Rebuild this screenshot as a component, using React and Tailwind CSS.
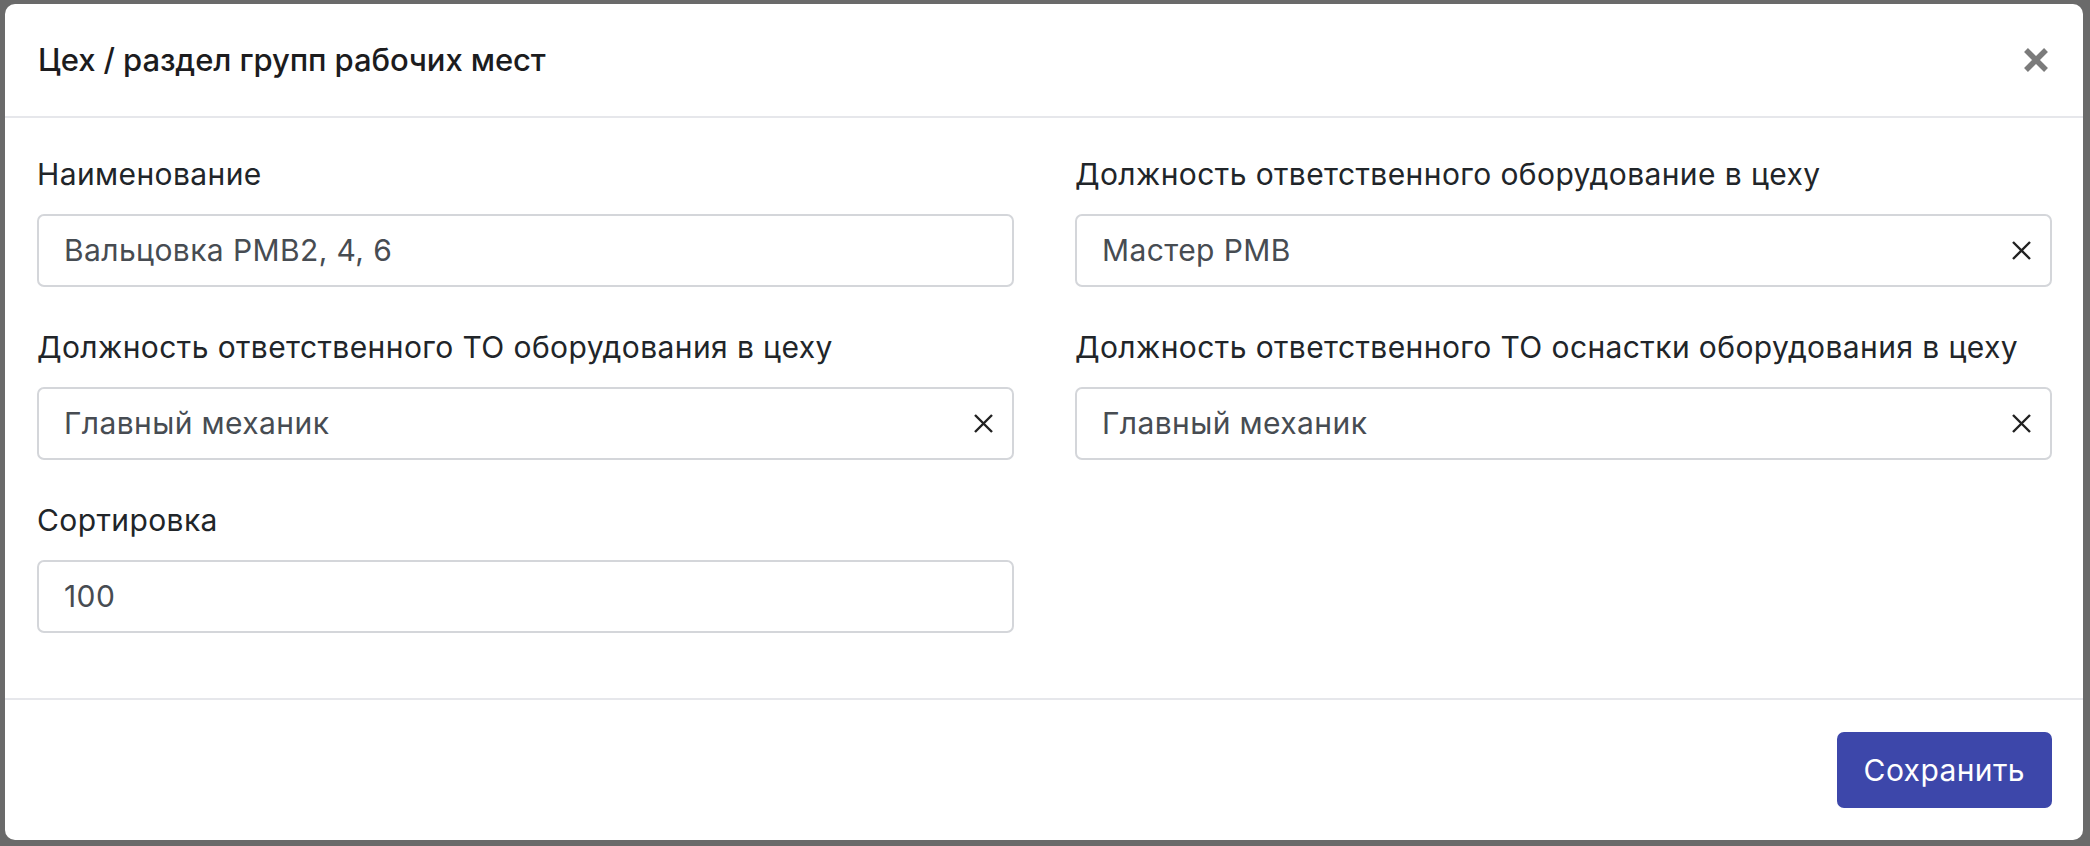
import React, { useState } from "react";

const font = { fontFamily: "Inter, 'Noto Sans', sans-serif" };

const ClearIcon = () => (
  <svg width="21" height="21" viewBox="0 0 21 21" className="shrink-0">
    <path d="M2 2 L19 19 M19 2 L2 19" stroke="#212121" strokeWidth="2.4" fill="none" />
  </svg>
);

const Field = ({ label, value, clearable, onChange }) => (
  <div className="flex flex-col">
    <label className="text-[30px] leading-[42px] text-[#212529] mb-[19px] tracking-[0.4px]">{label}</label>
    <div className="flex items-center h-[73px] border-2 border-[#d4d6da] rounded-[7px] pl-[25px] pr-[18px] mb-[39px]">
      <input
        value={value}
        onChange={e => onChange(e.target.value)}
        className="flex-1 min-w-0 bg-transparent outline-none text-[30px] text-[#474c52] tracking-[0.4px]"
        style={font}
      />
      {clearable && <button onClick={() => onChange("")}><ClearIcon /></button>}
    </div>
  </div>
);

export default function App() {
  const [name, setName] = useState("Вальцовка РМВ2, 4, 6");
  const [resp, setResp] = useState("Мастер РМВ");
  const [mech, setMech] = useState("Главный механик");
  const [tool, setTool] = useState("Главный механик");
  const [sort, setSort] = useState("100");

  return (
    <div className="w-[2090px] h-[846px] bg-[#6a6a6a] pt-[4px] pl-[5px] overflow-hidden" style={font}>
      <div className="w-[2078px] h-[836px] bg-white rounded-[10px] flex flex-col">
        <div className="flex items-center justify-between h-[114px] pl-[33px] pr-[34px] border-b-2 border-[#e6e7eb]">
          <h5 className="text-[31px] font-medium text-[#1c1c1e] tracking-[-0.1px]">Цех / раздел групп рабочих мест</h5>
          <button className="w-[26px] h-[26px]">
            <svg width="26" height="26" viewBox="0 0 26 26">
              <path d="M3 3 L23 23 M23 3 L3 23" stroke="#7b7b7b" strokeWidth="5.5" strokeLinecap="butt" fill="none" />
            </svg>
          </button>
        </div>

        <div className="grid grid-cols-2 gap-x-[61px] pt-[35px] pb-[26px] pl-[32px] pr-[31px]">
          <Field label="Наименование" value={name} onChange={setName} />
          <Field label="Должность ответственного оборудование в цеху" value={resp} onChange={setResp} clearable />
          <Field label="Должность ответственного ТО оборудования в цеху" value={mech} onChange={setMech} clearable />
          <Field label="Должность ответственного ТО оснастки оборудования в цеху" value={tool} onChange={setTool} clearable />
          <Field label="Сортировка" value={sort} onChange={setSort} />
        </div>

        <div className="flex justify-end items-center flex-1 border-t-2 border-[#e6e7eb] pr-[31px]">
          <button className="h-[76px] px-[27px] bg-[#3d47aa] text-white text-[30px] rounded-[7px] tracking-[0.4px]">
            Сохранить
          </button>
        </div>
      </div>
    </div>
  );
}
